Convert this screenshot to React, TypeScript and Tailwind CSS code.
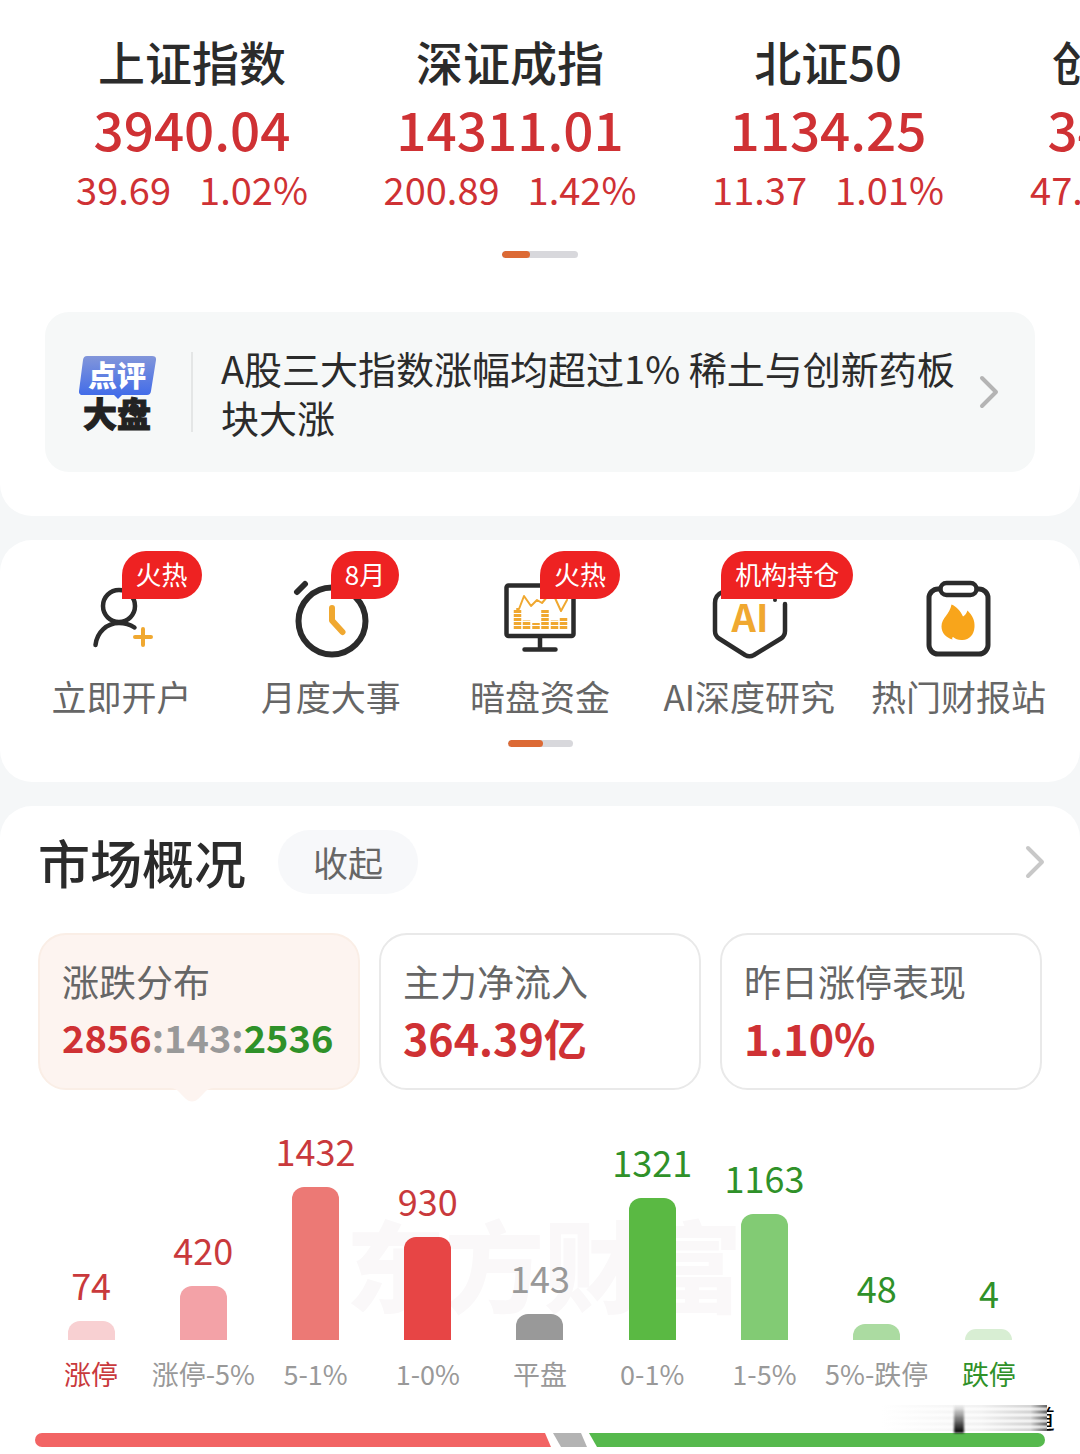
import type { ReactNode } from "react";
import clsx from "clsx";

const indices = [
  { name: "上证指数", value: "3940.04", change: "39.69", percent: "1.02%" },
  { name: "深证成指", value: "14311.01", change: "200.89", percent: "1.42%" },
  { name: "北证50", value: "1134.25", change: "11.37", percent: "1.01%" },
  { name: "创业板指", value: "3476.51", change: "47.28", percent: "1.38%" },
];

const bars = [
  { label: "涨停", count: 74, height: 19, bar: "bg-[#f8d0d2]", text: "text-[#c9393c]", labelText: "text-[#c9393c]" },
  { label: "涨停-5%", count: 420, height: 54, bar: "bg-[#f3a2a7]", text: "text-[#c9393c]", labelText: "text-[#999]" },
  { label: "5-1%", count: 1432, height: 153, bar: "bg-[#ec7975]", text: "text-[#c9393c]", labelText: "text-[#999]" },
  { label: "1-0%", count: 930, height: 103, bar: "bg-[#e74545]", text: "text-[#c9393c]", labelText: "text-[#999]" },
  { label: "平盘", count: 143, height: 26, bar: "bg-[#999]", text: "text-[#999]", labelText: "text-[#999]" },
  { label: "0-1%", count: 1321, height: 142, bar: "bg-[#5ab943]", text: "text-[#2f9129]", labelText: "text-[#999]" },
  { label: "1-5%", count: 1163, height: 126, bar: "bg-[#82cb74]", text: "text-[#2f9129]", labelText: "text-[#999]" },
  { label: "5%-跌停", count: 48, height: 16, bar: "bg-[#abdba1]", text: "text-[#2f9129]", labelText: "text-[#999]" },
  { label: "跌停", count: 4, height: 11, bar: "bg-[#d8eed3]", text: "text-[#2f9129]", labelText: "text-[#2f9129]" },
];

function AccountIcon() {
  return (
    <svg viewBox="0 0 80 80" className="size-20" fill="none" strokeLinecap="round">
      <circle cx="37" cy="26" r="16" stroke="#2b2b2b" strokeWidth="4.5" />
      <path d="M13.5 65C15 52 25 43 37 43c6 0 11 1.500 15.500 4.500" stroke="#2b2b2b" strokeWidth="4.500" />
      <path d="M61 49v16M53 57h16" stroke="#f0a830" strokeWidth="4" />
    </svg>
  );
}

function ClockIcon() {
  return (
    <svg viewBox="0 0 80 80" className="size-20" fill="none" strokeLinecap="round">
      <circle cx="41" cy="41" r="33.5" stroke="#2b2b2b" strokeWidth="6" />
      <path d="M6 12L14 4" stroke="#2b2b2b" strokeWidth="6" />
      <path d="M41 28v12.500L51.500 52" stroke="#f0a830" strokeWidth="6" strokeLinejoin="round" />
    </svg>
  );
}

function MonitorIcon() {
  return (
    <svg viewBox="0 0 80 80" className="size-20" fill="none" strokeLinecap="round" strokeLinejoin="round">
      <rect x="6.500" y="5.500" width="67" height="50.500" rx="2" stroke="#2b2b2b" strokeWidth="4.500" />
      <path d="M40 57v11M24.500 69.500h31" stroke="#2b2b2b" strokeWidth="4.500" />
      <path d="M17 29l2 0 5-13 7 10 6-6 5 3 5-6 8 1 6 13 6-11" stroke="#f0a830" strokeWidth="2" />
      <path
        d="M17.500 49V29.500M26.500 49V40.500M36 49V43M45 49V30M54.500 49V40.500M63.500 49V37.500"
        stroke="#f0a830"
        strokeWidth="7.500"
        strokeDasharray="3 1"
        strokeLinecap="butt"
      />
    </svg>
  );
}

function ShieldIcon() {
  return (
    <svg viewBox="0 0 80 80" className="size-20" fill="none" strokeLinecap="round">
      <path
        d="M76 24v27q0 5-4 7.500L45 75Q40.500 77.500 36 75L10 58.500Q6 56 6 51V23Q6 15 13.500 12"
        stroke="#2b2b2b"
        strokeWidth="4.500"
      />
      <circle cx="66" cy="20" r="2" fill="#2b2b2b" />
      <text x="41" y="52" textAnchor="middle" fontSize="38" fontWeight="700" fill="#f0a830">
        AI
      </text>
    </svg>
  );
}

function ReportIcon() {
  return (
    <svg viewBox="0 0 80 80" className="size-20" fill="none">
      <rect x="11" y="9" width="59" height="65" rx="9" stroke="#2b2b2b" strokeWidth="5" />
      <rect x="22.500" y="3" width="36" height="12" rx="6" fill="#fff" stroke="#2b2b2b" strokeWidth="4.500" />
      <path
        d="M33.500 24.500c5 2 9 6.500 11.500 12 2-1 3.500-3 4.500-6 5 5 7.500 10 7 16.500-.5 8-5 12.500-12 13-4 .3-7-1-9.500-3-1 .5-1 1.500-.5 2.500C28 57.500 23.500 53 23.500 46.500 23.500 38 32 34 33.500 24.500z"
        fill="#f8a51b"
      />
    </svg>
  );
}

function Chevron({ className }: { className: string }) {
  return (
    <svg viewBox="0 0 20 36" className={clsx("h-9 w-5 shrink-0", className)} fill="none">
      <path d="M3 4l14 14L3 32" stroke="currentColor" strokeWidth="4" strokeLinecap="round" strokeLinejoin="round" />
    </svg>
  );
}

function ReviewLogo() {
  return (
    <svg viewBox="0 0 78 80" className="h-20 w-[78px] shrink-0" fontWeight="900" textAnchor="middle">
      <defs>
        <linearGradient id="review" x1="0" y1="0" x2="0" y2="1">
          <stop offset="0" stopColor="#8296da" />
          <stop offset="1" stopColor="#3c68ea" />
        </linearGradient>
      </defs>
      <path d="M8 4h65q4.500 0 4 4l-5 31q-.5 4-4 4H43l-4 4-4-4H4q-4.500 0-4-4L4 8q.5-4 4-4z" fill="url(#review)" />
      <text x="38" y="35" fontSize="29" fill="#fff">
        点评
      </text>
      <text x="38" y="75" fontSize="34" fill="#222" stroke="#222" strokeWidth="1">
        大盘
      </text>
    </svg>
  );
}

function Pager({ width, active }: { width: string; active: string }) {
  return (
    <div className={clsx("mx-auto h-[7px] overflow-hidden rounded-full bg-[#d8d8dc]", width)}>
      <div className={clsx("h-full rounded-full bg-[#dc6a35]", active)} />
    </div>
  );
}

function MenuItem({
  label,
  badge,
  badgeClass,
  children,
}: {
  label: string;
  badge?: string;
  badgeClass?: string;
  children: ReactNode;
}) {
  return (
    <a href="#" className="relative flex flex-col items-center">
      {children}
      {badge && (
        <span
          className={clsx(
            "absolute -top-[29px] left-1/2 h-12 rounded-3xl rounded-bl-none bg-[#ee2222] px-3.5 text-[26px] leading-[46px] whitespace-nowrap text-white",
            badgeClass
          )}
        >
          {badge}
        </span>
      )}
      <span className="mt-3 text-[35px] leading-[48px] whitespace-nowrap text-[#666]">{label}</span>
    </a>
  );
}

function StatCard({
  label,
  active,
  children,
}: {
  label: string;
  active?: boolean;
  children: ReactNode;
}) {
  return (
    <button
      type="button"
      className={clsx(
        "relative rounded-[28px] border-2 px-[22px] pt-[18px] pb-[23px] text-left",
        active ? "border-[#faeee6] bg-[#fdf4f0]" : "border-[#e9e9e9] bg-white"
      )}
    >
      <span className="block text-[37px] leading-[56px] text-[#666]">{label}</span>
      <span
        className={clsx(
          "block leading-[56px] font-bold whitespace-nowrap text-[#cf3134]",
          active ? "text-[38px]" : "text-[43px]"
        )}
      >
        {children}
      </span>
      {active && (
        <svg viewBox="0 0 44 16" className="absolute top-full left-[130px] h-4 w-11">
          <path d="M0 0q6 0 10 5l6 6q6 5 12 0l6-6q4-5 10-5z" fill="#fdf4f0" />
        </svg>
      )}
    </button>
  );
}

function Distribution() {
  return (
    <div className="relative isolate grid grid-cols-9 px-[35px]">
      <div className="absolute top-[102px] left-[346px] -z-10 text-[99px] leading-[140px] font-black text-[#faf8f9]">
        东方财富
      </div>
      {bars.map(({ label, count, height, bar, text, labelText }) => (
        <div key={label} className="flex flex-col items-center">
          <div className="flex h-[250px] flex-col items-center justify-end">
            <span className={clsx("mb-[15px] text-[36px] leading-[44px]", text)}>{count}</span>
            <div className={clsx("w-[47px] rounded-t-[12px]", bar)} style={{ height }} />
          </div>
          <span className={clsx("mt-4 text-[27px] leading-9 whitespace-nowrap", labelText)}>{label}</span>
        </div>
      ))}
    </div>
  );
}

export default function App() {
  return (
    <div className="min-h-screen overflow-hidden bg-[#f5f7f8] font-['Noto_Sans_CJK_SC',sans-serif]">
      <section className="rounded-b-[32px] bg-white pt-8 pb-11">
        <div className="flex overflow-hidden pl-[33px]">
          {indices.map(({ name, value, change, percent }) => (
            <div key={name} className="w-[318px] shrink-0 text-center whitespace-nowrap text-[#cf3134]">
              <div className="text-[47px] leading-[58px] font-medium text-[#2b2b2b]">{name}</div>
              <div className="text-[53px] leading-[76px] font-medium">{value}</div>
              <div className="flex justify-center gap-7 text-[38px] leading-[46px]">
                <span>{change}</span>
                <span>{percent}</span>
              </div>
            </div>
          ))}
        </div>
        <div className="mt-[39px]">
          <Pager width="w-[76px]" active="w-7" />
        </div>
        <a href="#" className="mx-[45px] mt-[54px] flex items-center rounded-3xl bg-[#f6f8f8] py-[31px] pr-9 pl-[34px]">
          <ReviewLogo />
          <span className="ml-[34px] h-20 w-0.5 bg-[#e4e6e6]" />
          <span className="ml-7 flex-1 text-[38px] leading-[49px] text-[#2b2b2b]">
            A股三大指数涨幅均超过1% 稀土与创新药板块大涨
          </span>
          <Chevron className="text-[#b4b4b4]" />
        </a>
      </section>

      <section className="mt-6 rounded-[32px] bg-white pt-10 pb-[35px]">
        <nav className="mb-5 grid grid-cols-5 px-[17px]">
          <MenuItem label="立即开户" badge="火热">
            <AccountIcon />
          </MenuItem>
          <MenuItem label="月度大事" badge="8月">
            <ClockIcon />
          </MenuItem>
          <MenuItem label="暗盘资金" badge="火热">
            <MonitorIcon />
          </MenuItem>
          <MenuItem label="AI深度研究" badge="机构持仓" badgeClass="-ml-7">
            <ShieldIcon />
          </MenuItem>
          <MenuItem label="热门财报站">
            <ReportIcon />
          </MenuItem>
        </nav>
        <Pager width="w-[65px]" active="w-[35px]" />
      </section>

      <section className="mt-6 rounded-t-[32px] bg-white pt-6 pb-[7px]">
        <div className="flex items-center pr-[35px] pl-[38px]">
          <h2 className="text-[52px] leading-[60px] font-medium text-[#2b2b2b]">市场概况</h2>
          <button type="button" className="ml-8 h-16 rounded-full bg-[#f7f8fa] px-[35px] text-[35px] leading-[60px] text-[#666]">
            收起
          </button>
          <a href="#" aria-label="市场概况" className="ml-auto">
            <Chevron className="text-[#c8c8c8]" />
          </a>
        </div>

        <div className="mt-[39px] grid grid-cols-3 gap-[19px] px-[38px]">
          <StatCard label="涨跌分布" active>
            2856<span className="text-[#999]">:143:</span>
            <span className="text-[#2f9129]">2536</span>
          </StatCard>
          <StatCard label="主力净流入">364.39亿</StatCard>
          <StatCard label="昨日涨停表现">1.10%</StatCard>
        </div>

        <Distribution />

        <div className="relative mx-[35px] mt-[41px] flex h-3.5 gap-0.5">
          <div className="w-[516px] rounded-l-full bg-[#f26464] [clip-path:polygon(0_0,510px_0,100%_100%,0_100%)]" />
          <div className="w-[34px] bg-[#b3b3b3] [clip-path:polygon(0_0,28px_0,100%_100%,8px_100%)]" />
          <div className="flex-1 rounded-r-full bg-[#56b94d] [clip-path:polygon(0_0,100%_0,100%_100%,8px_100%)]" />
          {/* faded account tag */}
          <div className="absolute right-[-10px] bottom-full flex h-[30px] items-center">
            <div className="h-[26px] w-[165px] bg-[repeating-linear-gradient(to_bottom,transparent_0_2px,#fffa_3px_5px,transparent_6px),linear-gradient(to_right,#fff,#f2f2f2_60%,#d4d4d4_90%,#666)]" />
            <div className="flex w-2 justify-end overflow-hidden text-[26px] leading-[26px] text-black">道</div>
            <div className="absolute bottom-0 left-[72px] h-[28px] w-2.5 bg-linear-to-b from-transparent to-black blur-[1px]" />
          </div>
        </div>
      </section>
    </div>
  );
}
